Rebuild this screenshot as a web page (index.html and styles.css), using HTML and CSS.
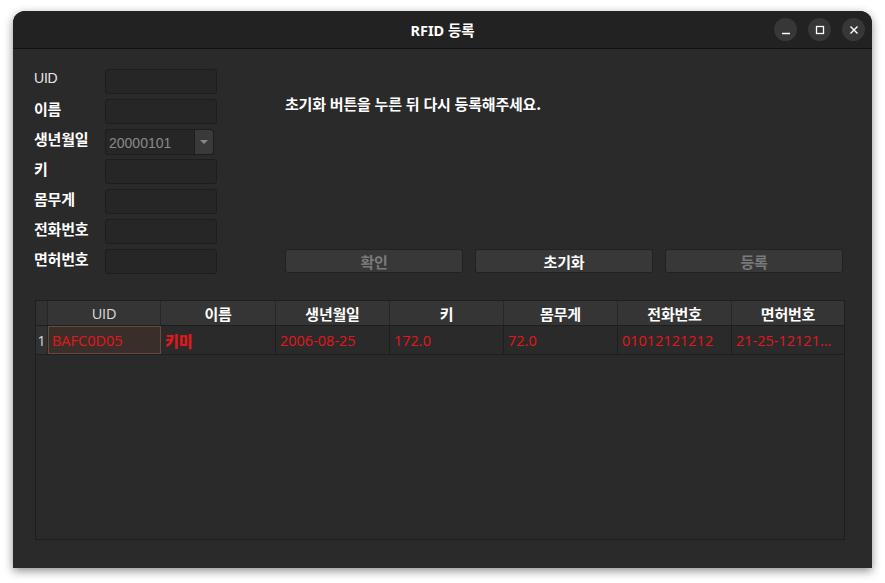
FILE: index.html
```html
<!DOCTYPE html>
<html lang="ko">
<head>
<meta charset="utf-8">
<link rel="stylesheet" href="styles.css">
</head>
<body>
<div class="window">
  <div class="titlebar">
    <div class="title">RFID 등록</div>
    <div class="controls">
      <span class="ctl"><svg width="10" height="10" viewBox="0 0 10 10"><path d="M1 8.5h8" stroke="#fff" stroke-width="1.3"/></svg></span>
      <span class="ctl"><svg width="10" height="10" viewBox="0 0 10 10"><rect x="1.5" y="1.5" width="7" height="7" fill="none" stroke="#fff" stroke-width="1.3"/></svg></span>
      <span class="ctl"><svg width="10" height="10" viewBox="0 0 10 10"><path d="M1.5 1.5l7 7M8.5 1.5l-7 7" stroke="#fff" stroke-width="1.4"/></svg></span>
    </div>
  </div>
  <div class="content">
    <div class="top">
      <div class="form">
        <div class="frow"><span class="lbl latin">UID</span><span class="inp"></span></div>
        <div class="frow"><span class="lbl">이름</span><span class="inp"></span></div>
        <div class="frow"><span class="lbl">생년월일</span><span class="combo"><span class="cval">20000101</span><span class="cbtn"><svg width="8" height="5" viewBox="0 0 8 5"><path d="M0 0h8L4 4z" fill="#888"/></svg></span></span></div>
        <div class="frow"><span class="lbl">키</span><span class="inp"></span></div>
        <div class="frow"><span class="lbl">몸무게</span><span class="inp"></span></div>
        <div class="frow"><span class="lbl">전화번호</span><span class="inp"></span></div>
        <div class="frow"><span class="lbl">면허번호</span><span class="inp"></span></div>
      </div>
      <div class="right">
        <div class="msg">초기화 버튼을 누른 뒤 다시 등록해주세요.</div>
        <div class="buttons">
          <span class="btn dis">확인</span>
          <span class="btn">초기화</span>
          <span class="btn dis">등록</span>
        </div>
      </div>
    </div>
    <div class="table">
      <div class="thead">
        <span class="corner"></span>
        <span class="th latin">UID</span>
        <span class="th">이름</span>
        <span class="th">생년월일</span>
        <span class="th">키</span>
        <span class="th">몸무게</span>
        <span class="th">전화번호</span>
        <span class="th">면허번호</span>
      </div>
      <div class="trow">
        <span class="rn">1</span>
        <span class="td sel">BAFC0D05</span>
        <span class="td bold">키미</span>
        <span class="td">2006-08-25</span>
        <span class="td">172.0</span>
        <span class="td">72.0</span>
        <span class="td">01012121212</span>
        <span class="td">21-25-12121…</span>
      </div>
    </div>
  </div>
</div>
</body>
</html>
```

FILE: styles.css
```css
* { box-sizing: border-box; }
html, body { margin: 0; padding: 0; }
body {
  width: 885px;
  height: 583px;
  background: #ffffff;
  font-family: "Noto Sans", "Noto Sans CJK KR", sans-serif;
  overflow: hidden;
}
.window {
  margin: 11px 0 0 13px;
  width: 859px;
  height: 557px;
  background: #2a2a2a;
  border-radius: 12px 12px 0 0;
  box-shadow: 0 3px 10px rgba(0,0,0,0.45);
  display: flex;
  flex-direction: column;
  overflow: hidden;
}
.titlebar {
  height: 38px;
  flex: none;
  background: #222222;
  border-bottom: 1px solid #111;
  position: relative;
  display: flex;
  align-items: center;
  justify-content: center;
}
.title {
  color: #ffffff;
  font-family: "Noto Sans", "Noto Sans CJK KR", sans-serif;
  font-weight: 700;
  font-size: 14.5px;
}
.controls {
  position: absolute;
  right: 7px;
  top: 7px;
  display: flex;
  gap: 11px;
}
.ctl {
  width: 23px;
  height: 23px;
  border-radius: 50%;
  background: #373737;
  display: flex;
  align-items: center;
  justify-content: center;
}
.content {
  padding: 20px 28px 28px 21px;
  display: flex;
  flex-direction: column;
  flex: 1;
}
.top {
  display: flex;
  height: 205px;
}
.form {
  width: 251px;
  flex: none;
  display: flex;
  flex-direction: column;
  gap: 5px;
}
.frow {
  display: flex;
  align-items: center;
  height: 25px;
}
.lbl {
  width: 71px;
  color: #ffffff;
  font-family: "Noto Sans CJK KR", sans-serif;
  font-weight: 700;
  font-size: 15px;
  letter-spacing: -0.2px;
  line-height: 20px;
  margin-top: -5px;
}
.lbl.latin {
  font-family: "Liberation Sans", Arial, sans-serif;
  font-weight: 400;
  color: #e6e6e6;
  font-size: 14px;
  margin-top: -7px;
}
.inp {
  width: 112px;
  height: 25px;
  background: #262626;
  border: 1px solid #1d1d1d;
  border-radius: 3px;
}
.combo {
  width: 109px;
  height: 26px;
  background: #262626;
  border: 1px solid #1d1d1d;
  border-radius: 3px;
  display: flex;
  align-items: center;
  margin-top: 1px;
}
.cval {
  flex: 1;
  color: #8a8a8a;
  font-family: "Liberation Sans", Arial, sans-serif;
  font-size: 14px;
  padding-left: 3px;
  padding-top: 1px;
}
.cbtn {
  width: 19px;
  height: 24px;
  background: #3a3a3a;
  border-left: 1px solid #1d1d1d;
  border-radius: 0 3px 3px 0;
  display: flex;
  align-items: center;
  justify-content: center;
}
.right {
  flex: 1;
  display: flex;
  flex-direction: column;
}
.msg {
  margin-top: 25px;
  color: #ffffff;
  font-family: "Noto Sans CJK KR", sans-serif;
  font-weight: 700;
  font-size: 15px;
  letter-spacing: -0.2px;
  line-height: 20px;
}
.buttons {
  margin-top: auto;
  margin-bottom: 1px;
  display: flex;
  gap: 12px;
}
.btn {
  width: 178px;
  flex: none;
  height: 24px;
  background: #383838;
  border: 1px solid #222;
  border-radius: 3px;
  display: flex;
  align-items: center;
  justify-content: center;
  color: #ffffff;
  font-family: "Noto Sans CJK KR", sans-serif;
  font-weight: 700;
  font-size: 15px;
  letter-spacing: -0.2px;
}
.btn.dis {
  color: #7a7a7a;
}
.table {
  margin-top: 26px;
  margin-left: 1px;
  width: 810px;
  height: 240px;
  border: 1px solid #1e1e1e;
  background: #2a2a2a;
}
.thead {
  display: flex;
  height: 25px;
  background: #353535;
  border-bottom: 1px solid #1e1e1e;
}
.corner {
  width: 12px;
  flex: none;
  background: #313131;
  border-right: 1px solid #262626;
}
.th {
  width: 114px;
  flex: none;
  border-right: 1px solid #262626;
  display: flex;
  align-items: center;
  justify-content: center;
  color: #ffffff;
  font-family: "Noto Sans CJK KR", sans-serif;
  font-weight: 700;
  font-size: 15px;
  letter-spacing: -0.2px;
}
.th:nth-child(2) { width: 113px; }
.th:nth-child(3) { width: 115px; }
.th:last-child { flex: 1; border-right: none; }
.th.latin {
  font-family: "Open Sans", "Noto Sans", sans-serif;
  font-weight: 400;
  color: #dddddd;
  font-size: 14.5px;
}
.trow {
  display: flex;
  height: 29px;
  border-bottom: 1px solid #1e1e1e;
}
.rn {
  width: 12px;
  flex: none;
  background: #313131;
  border-right: 1px solid #262626;
  color: #dddddd;
  font-family: "Open Sans", sans-serif;
  font-size: 14px;
  display: flex;
  align-items: center;
  justify-content: center;
}
.td {
  width: 114px;
  flex: none;
  border-right: 1px solid #1e1e1e;
  display: flex;
  align-items: center;
  padding-left: 4px;
  color: #e3171b;
  font-family: "Open Sans", "Noto Sans CJK KR", sans-serif;
  font-size: 14.5px;
  white-space: nowrap;
  overflow: hidden;
}
.td:nth-child(2) { width: 113px; }
.td:nth-child(3) { width: 115px; }
.td:last-child { flex: 1; border-right: none; }
.td.sel {
  background: #3a2e2a;
  border: 1px solid #6a4a3e;
  padding-left: 3px;
}
.td.bold {
  font-family: "Noto Sans CJK KR", sans-serif;
  font-weight: 900;
  font-size: 15px;
}
```
